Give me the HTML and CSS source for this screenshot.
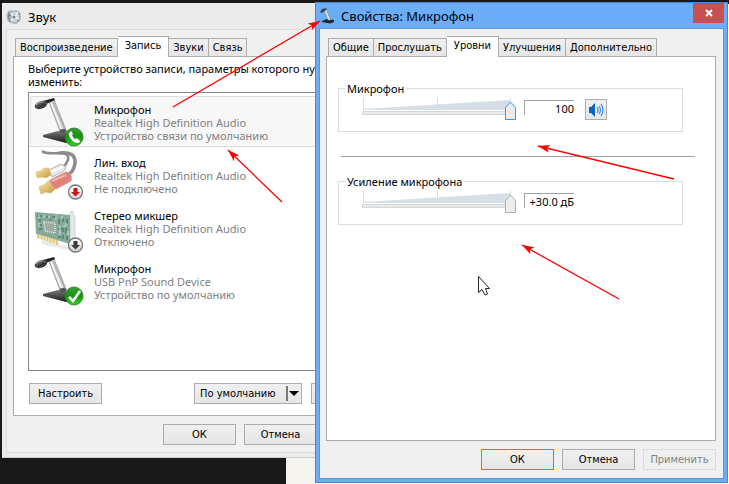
FILE: index.html
```html
<!DOCTYPE html>
<html lang="ru">
<head>
<meta charset="utf-8">
<title>Звук</title>
<link rel="stylesheet" href="styles.css">
</head>
<body>
<svg class="defs" aria-hidden="true">
  <defs>
    <linearGradient id="base" x1="0" x2="0" y1="0" y2="1"><stop offset="0" stop-color="#777"/><stop offset="1" stop-color="#1c1c1c"/></linearGradient>
    <linearGradient id="green" x1="0" x2="0" y1="0" y2="1"><stop offset="0" stop-color="#3c9a35"/><stop offset=".5" stop-color="#159510"/><stop offset="1" stop-color="#35d51c"/></linearGradient>
    <linearGradient id="gold" x1="0" x2="1" y1="0" y2="1"><stop offset="0" stop-color="#f7e7ae"/><stop offset=".6" stop-color="#dcb862"/><stop offset="1" stop-color="#b99447"/></linearGradient>
    <linearGradient id="grey" x1="0" x2="0" y1="0" y2="1"><stop offset="0" stop-color="#fff"/><stop offset="1" stop-color="#d2d2d2"/></linearGradient>
    <marker id="head" markerUnits="userSpaceOnUse" markerWidth="14" markerHeight="10" refX="12" refY="4" orient="auto"><path d="M12 4L0 0L3 4L0 8Z" fill="#f00"/></marker>
    <symbol id="mic" viewBox="0 0 50 50">
      <path d="M9 38L24 34L37 37L37 44L32 46L9 40Z" fill="url(#base)"/>
      <path d="M15 5L20 3L32 33Q29 36 26 34Z" fill="#d4d4d4" stroke="#8a8a8a" stroke-width=".8"/>
      <path d="M17 6L28 33" stroke="#fff" stroke-width="1.200"/>
      <path d="M19 5L31 33" stroke="#999" stroke-width=".8"/>
      <ellipse cx="29" cy="34" rx="3.500" ry="2" fill="#555"/>
      <path d="M9 4L20 1L21 3L12 7Z" fill="#222"/>
      <ellipse cx="7" cy="8" rx="6.500" ry="3.800" transform="rotate(-20 7 8)" fill="#505050"/>
      <path d="M2 8Q5 4 9 5" stroke="#a5a5a5" stroke-width="1.200" fill="none"/>
      <path d="M4 11L10 7M8 11L12 7" stroke="#1d1d1d" stroke-width="1"/>
    </symbol>
  </defs>
</svg>

<main class="desktop">
  <div class="page-behind"></div>
  <div class="page-edge"></div>

  <section class="window sound" aria-labelledby="sound-title">
    <header class="titlebar">
      <svg class="app-icon" viewBox="0 0 16 16" aria-hidden="true">
        <path d="M2 2L6 1L8 3L10 1L14 3L15 8L14 12L10 15L4 14L1 11L0 6Z" fill="#b4bcc4"/>
        <path d="M3 3Q1 8 4 13" stroke="#747c84" fill="none"/>
        <ellipse cx="9" cy="8" rx="5" ry="6" fill="#cbd3d9" stroke="#9ba4ac"/>
        <path d="M5 4L9 8L12 3M5 12L9 8L13 10" stroke="#eef3f6" stroke-width="1.500" fill="none"/>
        <circle cx="8" cy="8" r="1.500" fill="#78818a"/>
        <path d="M12 4L14 6M11 12L13 11M3 6L5 7" stroke="#68707a"/>
      </svg>
      <h1 id="sound-title">Звук</h1>
    </header>
    <div class="client">
      <nav class="tabs" role="tablist">
        <button class="tab" role="tab">Воспроизведение</button>
        <button class="tab selected" role="tab" aria-selected="true">Запись</button>
        <button class="tab" role="tab">Звуки</button>
        <button class="tab" role="tab">Связь</button>
      </nav>
      <div class="panel record">
        <p class="hint">Выберите устройство записи, параметры которого нужно изменить:</p>
        <ul class="devices">
          <li class="device active">
            <svg class="device-icon" viewBox="0 0 50 50" aria-hidden="true">
              <use href="#mic" width="50" height="50"/>
              <circle cx="40" cy="40" r="9" fill="url(#green)" stroke="#24751f" stroke-width=".8"/>
              <path d="M36 35Q34 36 35 39Q38 45 43 46Q46 46 46 44L43 41L41 42Q39 41 38 38L39 37L37 34Z" fill="#fff"/>
            </svg>
            <div><strong>Микрофон</strong><span>Realtek High Definition Audio</span><span>Устройство связи по умолчанию</span></div>
          </li>
          <li class="device">
            <svg class="device-icon" viewBox="0 0 50 50" aria-hidden="true">
              <path d="M8 1Q11 4 25 3Q36 3 34 10Q32 15 28 18" stroke="#8a8a8a" stroke-width="2.500" fill="none"/>
              <path d="M25 3Q42 1 41 13Q40 21 35 24" stroke="#8c8c8c" stroke-width="3.500" fill="none"/>
              <path d="M15 20L27 14L32 17L30 21L18 27Z" fill="#e9e9e9" stroke="#b5b5b5"/>
              <path d="M17 22L29 17" stroke="#fff" stroke-width="2"/>
              <path d="M2 22L7 21L10 18L15 18L17 25L12 28L8 27L3 28Z" fill="url(#gold)" stroke="#d9bd7d" stroke-width=".6"/>
              <path d="M5 37L10 35L14 31L20 31L22 38L17 43L12 42L7 44Z" fill="url(#gold)" stroke="#cfae65" stroke-width=".6"/>
              <path d="M16 30L32 22Q39 23 37 31L22 39Q17 36 16 30Z" fill="#e08079" stroke="#d59a94"/>
              <path d="M18 31L32 25" stroke="#f0b5af" stroke-width="2"/>
              <circle cx="41.500" cy="42" r="7" fill="url(#grey)" stroke="#777" stroke-width="1.300"/>
              <path d="M39.500 38H43.500V42H46L41.500 46.500L37 42H39.500Z" fill="#cc1518"/>
            </svg>
            <div><strong>Лин. вход</strong><span>Realtek High Definition Audio</span><span>Не подключено</span></div>
          </li>
          <li class="device">
            <svg class="device-icon" viewBox="0 -8 50 50" aria-hidden="true">
              <path d="M8 29L36 36L40 40L20 36L8 33Z" fill="#e8e8e8"/>
              <path d="M36 1L39 0V4L41 5V34L38 37L36 35Z" fill="#e3e6ea" stroke="#c2c7cc" stroke-width=".7"/>
              <path d="M1 1L36 4V33L2 23Z" fill="#86aa99"/>
              <path d="M3 23L24 29V34L3 27Z" fill="#e4c878"/>
              <path d="M6 24V28M9 25V29M12 26V30M15 27V31M18 28V32M21 29V33" stroke="#fff" stroke-width=".8"/>
              <path d="M10 11L21 12V22L11 20Z" fill="#a3aba8" stroke="#e1e8e5" stroke-width="1.500" stroke-dasharray="1 1"/>
              <path d="M3 5H8M4 8L7 10M4 14H8M5 18H8M12 5L17 9M18 6H23M25 8V13M29 7V11M33 8V13M24 18H28M29 17V21M32 17V22M29 24V28M33 25V29M24 26H27" stroke="#5c8876" stroke-width="2"/>
              <path d="M5 4V8M10 4V7M15 5V8M22 4V9M28 5V8M30 14V16M26 15V24M32 12V15M5 12V16M34 20V24" stroke="#d6e0dc" stroke-width="1"/>
              <circle cx="41.500" cy="34" r="7" fill="url(#grey)" stroke="#777" stroke-width="1.300"/>
              <path d="M39.500 30H43.500V34H46L41.500 38.500L37 34H39.500Z" fill="#3b3b3b"/>
            </svg>
            <div><strong>Стерео микшер</strong><span>Realtek High Definition Audio</span><span>Отключено</span></div>
          </li>
          <li class="device">
            <svg class="device-icon" viewBox="0 0 50 50" aria-hidden="true">
              <use href="#mic" width="50" height="50"/>
              <circle cx="40" cy="40" r="9" fill="url(#green)" stroke="#24751f" stroke-width=".8"/>
              <path d="M35 41L39 45L46 35" stroke="#fff" stroke-width="2.500" fill="none"/>
            </svg>
            <div><strong>Микрофон</strong><span>USB PnP Sound Device</span><span>Устройство по умолчанию</span></div>
          </li>
        </ul>
        <div class="device-actions">
          <button class="btn">Настроить</button>
          <button class="btn split">По умолчанию<i class="caret"></i></button>
          <button class="btn">Свойства</button>
        </div>
      </div>
      <footer class="actions">
        <button class="btn">ОК</button>
        <button class="btn">Отмена</button>
        <button class="btn" disabled>Применить</button>
      </footer>
    </div>
  </section>

  <section class="window props" aria-labelledby="props-title">
    <header class="titlebar">
      <svg class="app-icon" viewBox="0 0 16 16" aria-hidden="true">
        <path d="M3 13L8 11L15 12V14L11 15.500L3 14Z" fill="#20262c"/>
        <path d="M5 2L7 1L12 12L9 12Z" fill="#dfe5ea" stroke="#7b8791" stroke-width=".7"/>
        <path d="M1 4L3 1L8 0L7 2L3 5Z" fill="#3c4650"/>
      </svg>
      <h1 id="props-title">Свойства: Микрофон</h1>
      <button class="close" aria-label="Закрыть"><svg viewBox="0 0 8 8"><path d="M1 1L7 7M7 1L1 7" stroke="#fff" stroke-width="2"/></svg></button>
    </header>
    <div class="client">
      <nav class="tabs" role="tablist">
        <button class="tab" role="tab">Общие</button>
        <button class="tab" role="tab">Прослушать</button>
        <button class="tab selected" role="tab" aria-selected="true">Уровни</button>
        <button class="tab" role="tab">Улучшения</button>
        <button class="tab" role="tab">Дополнительно</button>
      </nav>
      <div class="panel levels">
        <fieldset class="level">
          <legend>Микрофон</legend>
          <div class="slider focus">
            <svg viewBox="0 0 156 22" aria-hidden="true"><path d="M2 11L150 2V12H2Z" fill="#d6dfe7"/><path d="M2.500 0V12M76.500 0V12M149.500 0V12" stroke="#dcdcdc"/><path d="M1.500 13.500H150V16.500H1.500Z" fill="#e7eaea" stroke="#d6d6d6"/></svg>
            <input type="range" min="0" max="100" value="100" aria-label="Микрофон">
          </div>
          <input class="value" type="text" value="100" aria-label="Уровень микрофона">
          <button class="mute" aria-label="Отключить звук">
            <svg viewBox="0 0 16 16"><path d="M1 5H3V11H1Z" fill="#0a63c6"/><path d="M3 5L7 1V15L3 11Z" fill="#0a63c6"/><path d="M9 5Q11 8 9 11M11 4Q14 8 11 12M13 2Q17 8 13 14" fill="none" stroke="#3b8bdd" stroke-width="1.200"/></svg>
          </button>
        </fieldset>
        <hr>
        <fieldset class="level">
          <legend>Усиление микрофона</legend>
          <div class="slider">
            <svg viewBox="0 0 156 22" aria-hidden="true"><path d="M2 11L150 2V12H2Z" fill="#d6dfe7"/><path d="M2.500 0V12M76.500 0V12M149.500 0V12" stroke="#dcdcdc"/><path d="M1.500 13.500H150V16.500H1.500Z" fill="#e7eaea" stroke="#d6d6d6"/></svg>
            <input type="range" min="0" max="30" value="30" aria-label="Усиление микрофона">
          </div>
          <input class="value" type="text" value="+30.0 дБ" aria-label="Уровень усиления">
        </fieldset>
      </div>
      <footer class="actions">
        <button class="btn default">ОК</button>
        <button class="btn">Отмена</button>
        <button class="btn" disabled>Применить</button>
      </footer>
    </div>
  </section>

  <svg class="annotations" aria-hidden="true">
    <g stroke="#f00" stroke-width="1.300" fill="none">
      <path d="M173 107L320 21" marker-end="url(#head)"/>
      <path d="M282 202L228 150" marker-end="url(#head)"/>
      <path d="M674 179L538 146" marker-end="url(#head)"/>
      <path d="M619 299L522 245" marker-end="url(#head)"/>
    </g>
    <path d="M478.500 276.500V292.500L482 289.500L485 295L487.500 294L485.500 288.500H489.500Z" fill="#fff" stroke="#223" stroke-width="1"/>
  </svg>
</main>
</body>
</html>
```
FILE: styles.css
```css
* { box-sizing: border-box; }
body {
  margin: 0;
  font: 11px/13px "DejaVu Sans Condensed", "Liberation Sans", sans-serif;
  color: #000;
}
button, input { font: inherit; color: inherit; }
.defs { position: absolute; width: 0; height: 0; }
.desktop {
  position: relative;
  min-height: 100vh;
  overflow: hidden;
  background: #191919;
}
.page-behind {
  position: absolute;
  inset: 458px 0 0 286px;
  background: #f4f3ee;
}
.page-edge {
  position: absolute;
  inset: 4px 0 0 auto;
  width: 8px;
  background: #fff;
}

/* Windows */
.window {
  position: absolute;
  display: flex;
  flex-direction: column;
}
.sound {
  left: 2px;
  top: 3px;
  width: 406px;
  height: 455px;
  padding: 0 4px 4px 3px;
  background: #ebebeb;
  border: 1px solid #cfcfcf;
  border-top-color: #ebebeb;
  border-left-color: #ebebeb;
}
.props {
  inset: 2px 1px 1px 315px;
  padding: 0 3px 3px;
  background: #6badf6;
  border: 1px solid #4c86c6;
}
.titlebar {
  display: flex;
  align-items: center;
  height: 25px;
  flex: none;
}
.app-icon { width: 16px; height: 16px; }
.titlebar h1 {
  margin: 0 auto 0 6px;
  font: 13px/20px "Noto Sans", sans-serif;
}
.close {
  align-self: flex-start;
  display: grid;
  place-items: center;
  width: 31px;
  height: 20px;
  padding: 0;
  border: 0;
  background: #c75050;
}
.close svg { width: 8px; height: 8px; }
.client {
  flex: 1;
  display: flex;
  flex-direction: column;
  padding: 6px 4px 7px 6px;
  background: #f0f0f0;
  border: 1px solid #dcdcdc;
}
.props .client { border-color: #5b95d8; padding: 7px 7px 8px 6px; }

/* Tabs */
.tabs {
  display: flex;
  align-items: flex-end;
  padding-left: 2px;
}
.tab {
  height: 18px;
  padding: 0 4px;
  border: 1px solid #acacac;
  border-bottom: 0;
  background: linear-gradient(#f0f0f0, #e5e5e5);
}
.tab + .tab { border-left: 0; }
.tab.selected {
  position: relative;
  height: 21px;
  margin-bottom: -1px;
  padding: 0 7px 3px;
  background: #fff;
}
.panel {
  flex: 1;
  background: #fff;
  border: 1px solid #acacac;
}

/* Recording devices */
.record {
  display: flex;
  flex-direction: column;
  padding: 5px 13px 11px 14px;
}
.hint, .devices { font-family: "Noto Sans", sans-serif; }
.hint { margin: 0; padding-bottom: 4px; }
.devices {
  flex: 1;
  margin: 0;
  padding: 3px 1px;
  list-style: none;
  border: 1px solid #828790;
}
.device {
  display: flex;
  gap: 10px;
  height: 51px;
  margin-bottom: 2px;
  padding: 0 3px;
  border: 1px solid transparent;
}
.device.active { background: #f7f7f7; border-color: #dedede; }
.device-icon { width: 50px; height: 50px; flex: none; }
.device div { padding-top: 6px; }
.device strong, .device span { display: block; font-weight: 400; }
.device span { color: #808080; }
.device-actions { display: flex; gap: 9px; padding: 12px 0 0 1px; }

/* Buttons */
.btn {
  width: 73px;
  height: 21px;
  padding: 0;
  border: 1px solid #acacac;
  background: linear-gradient(#f0f0f0, #e5e5e5);
}
.btn.default { border-color: #3399ff; }
.btn:disabled { color: #838383; border-color: #d9d9d9; background: #efefef; }
.split {
  display: flex;
  align-items: center;
  justify-content: space-between;
  width: 108px;
  margin-left: auto;
  padding: 0 2px 0 5px;
}
.caret {
  display: grid;
  place-items: center;
  width: 13px;
  height: 15px;
  border-left: 2px solid #777;
}
.caret::before {
  content: "";
  border: 5px solid transparent;
  border-top-color: #000;
  border-bottom: 0;
}
.actions {
  display: flex;
  justify-content: flex-end;
  gap: 8px;
  padding-top: 8px;
}

/* Levels */
.levels { padding: 25px 32px 0 11px; font-family: "Noto Sans", sans-serif; }
.level {
  display: flex;
  align-items: flex-start;
  height: 50px;
  min-width: 0;
  margin: 0;
  padding: 3px 0 0 22px;
  border: 1px solid #dcdcdc;
}
.level legend { margin-left: -16px; padding: 0 2px; }
.levels hr {
  height: 1px;
  margin: 24px -12px 18px 3px;
  border: 0;
  background: #a0a0a0;
}
.slider { position: relative; width: 155px; height: 22px; }
.slider svg { display: block; width: 156px; height: 22px; }
.slider input {
  position: absolute;
  inset: 0;
  width: 100%;
  height: 22px;
  margin: 0;
  appearance: none;
  background: none;
}
.slider input::-webkit-slider-thumb {
  appearance: none;
  width: 11px;
  height: 19px;
  margin-top: 3px;
  background: url("data:image/svg+xml,%3Csvg xmlns='http://www.w3.org/2000/svg' viewBox='0 0 11 19'%3E%3Cpath d='M.5 6.500L5.500 1L10.500 6.500V18.500H.5Z' fill='%23ececec' stroke='%23acacac'/%3E%3C/svg%3E");
}
.slider.focus input::-webkit-slider-thumb {
  background: url("data:image/svg+xml,%3Csvg xmlns='http://www.w3.org/2000/svg' viewBox='0 0 11 19'%3E%3Cpath d='M.5 6.500L5.500 1L10.500 6.500V18.500H.5Z' fill='%23ececec' stroke='%233399ff'/%3E%3C/svg%3E");
}
.value {
  width: 50px;
  height: 15px;
  margin: 2px 11px 0 8px;
  padding: 0;
  text-align: right;
  border: 1px solid #a0a0a0;
  border-width: 1px 0 0 1px;
}
.mute {
  display: grid;
  place-items: center;
  width: 22px;
  height: 21px;
  margin-top: 1px;
  padding: 0;
  border: 1px solid #acacac;
  background: linear-gradient(#f0f0f0, #e5e5e5);
}
.mute svg { width: 16px; height: 16px; }

.annotations {
  position: absolute;
  inset: 0;
  width: 100%;
  height: 100%;
  pointer-events: none;
}
```
